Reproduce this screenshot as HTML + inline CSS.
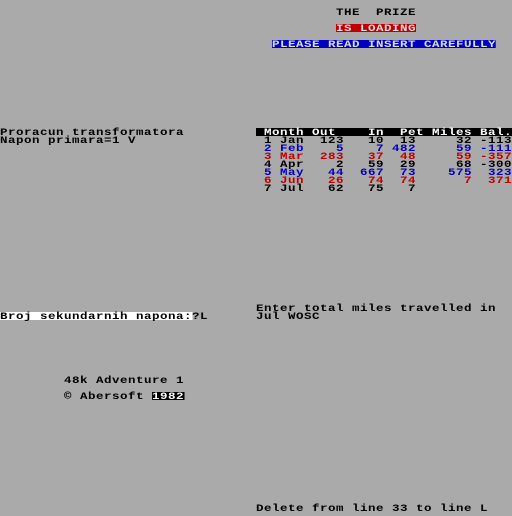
<!DOCTYPE html>
<html><head><style>
html,body{margin:0;padding:0}
body{width:512px;height:512px;background:#aaaaaa;position:relative;overflow:hidden;font-family:"Liberation Mono",monospace;}
.l{position:absolute;height:8px;line-height:12px;font-size:10px;font-weight:bold;letter-spacing:0.4px;white-space:pre;color:#000;transform:scaleX(1.25);transform-origin:0 0;overflow:visible}
.r{color:#c00000}.b{color:#0000c0}
</style></head><body>
<div class="l" style="left:336px;top:8px">THE  PRIZE</div>
<div class="l" style="left:336px;top:24px;width:64px;background:#c00000;color:#ddd">IS LOADING</div>
<div class="l" style="left:272px;top:40px;width:179.2px;background:#0000c0;color:#ddd">PLEASE READ INSERT CAREFULLY</div>
<div class="l" style="left:0;top:128px">Proracun transformatora</div>
<div class="l" style="left:0;top:136px">Napon primara=1 V</div>
<div class="l" style="left:256px;top:128px;width:204.8px;background:#000;color:#fff"> Month Out    In  Pet Miles Bal.</div>
<div class="l" style="left:256px;top:136px"> 1 Jan  123   10  13     32 -113</div>
<div class="l b" style="left:256px;top:144px"> 2 Feb    5    7 482     59 -111</div>
<div class="l r" style="left:256px;top:152px"> 3 Mar  283   37  48     59 -357</div>
<div class="l" style="left:256px;top:160px"> 4 Apr    2   59  29     68 -300</div>
<div class="l b" style="left:256px;top:168px"> 5 May   44  667  73    575  323</div>
<div class="l r" style="left:256px;top:176px"> 6 Jun   26   74  74      7  371</div>
<div class="l" style="left:256px;top:184px"> 7 Jul   62   75   7</div>
<div class="l" style="left:256px;top:304px">Enter total miles travelled in</div>
<div class="l" style="left:256px;top:312px">Jul WOSC</div>
<div class="l" style="left:0;top:312px;width:153.6px;background:#fff">Broj sekundarnih napona:</div>
<div class="l" style="left:192px;top:312px">?L</div>
<div class="l" style="left:64px;top:376px">48k Adventure 1</div>
<div class="l" style="left:64px;top:392px">© Abersoft</div>
<div class="l" style="left:152px;top:392px;width:25.6px;background:#000;color:#fff">1982</div>
<div class="l" style="left:256px;top:504px">Delete from line 33 to line L</div>
</body></html>
